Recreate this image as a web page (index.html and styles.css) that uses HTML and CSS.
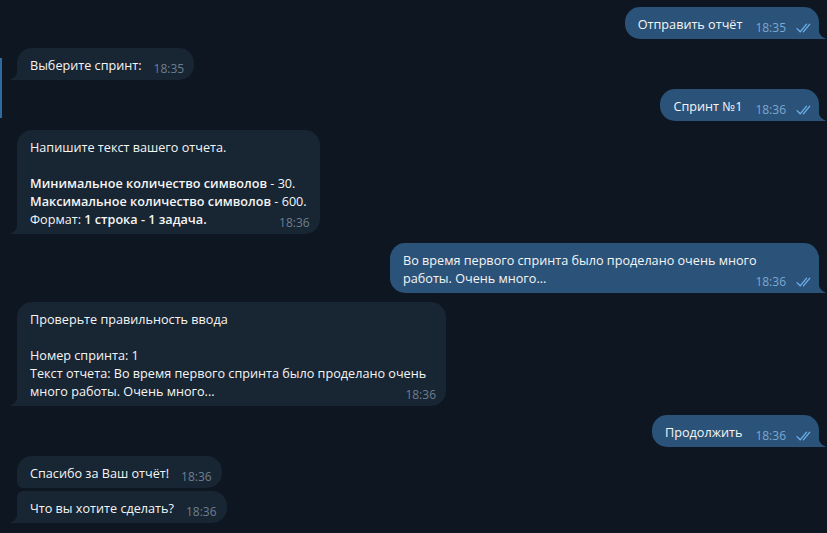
FILE: index.html
```html
<!DOCTYPE html>
<html lang="ru">
<head>
<meta charset="utf-8">
<link rel="stylesheet" href="styles.css">
</head>
<body>
<div class="edge"></div>
<div class="chat">
  <div class="row out">
    <div class="bubble tail">
      Отправить отчёт<span class="meta"><span class="time">18:35</span><svg class="check" viewBox="0 0 16 10"><path d="M1 5.6 L4.2 8.8 L10.6 1.2 M7.4 8.8 L13.8 1.2"/></svg></span>
      <svg class="tailsvg" viewBox="0 0 8 14"><path d="M0 0 C0 8 3 12 7.4 13.3 C7.9 13.5 7.8 14 7.2 14 L0 14 Z"/></svg>
    </div>
  </div>
  <div class="row in">
    <div class="bubble tail">
      Выберите спринт:<span class="meta"><span class="time">18:35</span></span>
      <svg class="tailsvg" viewBox="0 0 8 14"><path d="M8 0 C8 8 5 12 0.6 13.3 C0.1 13.5 0.2 14 0.8 14 L8 14 Z"/></svg>
    </div>
  </div>
  <div class="row out">
    <div class="bubble tail">
      Спринт №1<span class="meta"><span class="time">18:36</span><svg class="check" viewBox="0 0 16 10"><path d="M1 5.6 L4.2 8.8 L10.6 1.2 M7.4 8.8 L13.8 1.2"/></svg></span>
      <svg class="tailsvg" viewBox="0 0 8 14"><path d="M0 0 C0 8 3 12 7.4 13.3 C7.9 13.5 7.8 14 7.2 14 L0 14 Z"/></svg>
    </div>
  </div>
  <div class="row in">
    <div class="bubble tail">
      Напишите текст вашего отчета.<br><br><b>Минимальное количество символов</b> - 30.<br><b>Максимальное количество символов</b> - 600.<br>Формат: <b>1 строка - 1 задача.</b><span class="meta"><span class="time">18:36</span></span>
      <svg class="tailsvg" viewBox="0 0 8 14"><path d="M8 0 C8 8 5 12 0.6 13.3 C0.1 13.5 0.2 14 0.8 14 L8 14 Z"/></svg>
    </div>
  </div>
  <div class="row out">
    <div class="bubble tail">
      Во время первого спринта было проделано очень много работы. Очень много...<span class="meta"><span class="time">18:36</span><svg class="check" viewBox="0 0 16 10"><path d="M1 5.6 L4.2 8.8 L10.6 1.2 M7.4 8.8 L13.8 1.2"/></svg></span>
      <svg class="tailsvg" viewBox="0 0 8 14"><path d="M0 0 C0 8 3 12 7.4 13.3 C7.9 13.5 7.8 14 7.2 14 L0 14 Z"/></svg>
    </div>
  </div>
  <div class="row in">
    <div class="bubble tail">
      Проверьте правильность ввода<br><br>Номер спринта: 1<br>Текст отчета: Во время первого спринта было проделано очень много работы. Очень много...<span class="meta"><span class="time">18:36</span></span>
      <svg class="tailsvg" viewBox="0 0 8 14"><path d="M8 0 C8 8 5 12 0.6 13.3 C0.1 13.5 0.2 14 0.8 14 L8 14 Z"/></svg>
    </div>
  </div>
  <div class="row out">
    <div class="bubble tail">
      Продолжить<span class="meta"><span class="time">18:36</span><svg class="check" viewBox="0 0 16 10"><path d="M1 5.6 L4.2 8.8 L10.6 1.2 M7.4 8.8 L13.8 1.2"/></svg></span>
      <svg class="tailsvg" viewBox="0 0 8 14"><path d="M0 0 C0 8 3 12 7.4 13.3 C7.9 13.5 7.8 14 7.2 14 L0 14 Z"/></svg>
    </div>
  </div>
  <div class="group">
    <div class="row in">
      <div class="bubble first">
        Спасибо за Ваш отчёт!<span class="meta"><span class="time">18:36</span></span>
      </div>
    </div>
    <div class="row in">
      <div class="bubble tail last">
        Что вы хотите сделать?<span class="meta"><span class="time">18:36</span></span>
        <svg class="tailsvg" viewBox="0 0 8 14"><path d="M8 0 C8 8 5 12 0.6 13.3 C0.1 13.5 0.2 14 0.8 14 L8 14 Z"/></svg>
      </div>
    </div>
  </div>
</div>
</body>
</html>
```
FILE: styles.css
```css
html, body {
  margin: 0;
  padding: 0;
  background: #0e1621;
  height: 100%;
  overflow: hidden;
}
body {
  font-family: "Open Sans", "Noto Sans", sans-serif;
  font-size: 12.65px;
  line-height: 18px;
  color: #f5f5f5;
  position: relative;
}
.edge {
  position: absolute;
  left: 0;
  top: 58px;
  width: 2px;
  height: 60px;
  background: #2f6a9e;
}
.chat {
  display: flex;
  flex-direction: column;
  gap: 9px;
  padding: 7px 8px 0 17px;
}
.group {
  display: flex;
  flex-direction: column;
  gap: 3px;
}
.row {
  display: flex;
}
.row.in { justify-content: flex-start; }
.row.out { justify-content: flex-end; }
.bubble {
  position: relative;
  max-width: 403px;
  padding: 8px 13px 6px;
  border-radius: 15px;
  background: #182533;
}
.out .bubble {
  background: #2b5278;
}
.in .bubble.tail { border-bottom-left-radius: 0; }
.out .bubble.tail { border-bottom-right-radius: 0; }
.in .bubble.first { border-bottom-left-radius: 6px; }
.in .bubble.last { border-top-left-radius: 6px; }
b {
  font-weight: 600;
}
.meta {
  float: right;
  display: flex;
  align-items: center;
  margin: 4px -3px -4px 12px;
  height: 18px;
}
.out .meta {
  margin-right: -6px;
  margin-left: 13px;
}
.time {
  font-size: 12px;
  color: #6d7f8f;
}
.out .time {
  color: #7da8d3;
}
.check {
  width: 16px;
  height: 10px;
  margin-left: 10px;
  fill: none;
  stroke: #6cb2ee;
  stroke-width: 1.3;
  stroke-linecap: round;
  stroke-linejoin: round;
}
.tailsvg {
  position: absolute;
  bottom: 0;
  width: 8px;
  height: 14px;
}
.in .tailsvg {
  left: -7px;
  fill: #182533;
}
.out .tailsvg {
  right: -7px;
  fill: #2b5278;
}
```
